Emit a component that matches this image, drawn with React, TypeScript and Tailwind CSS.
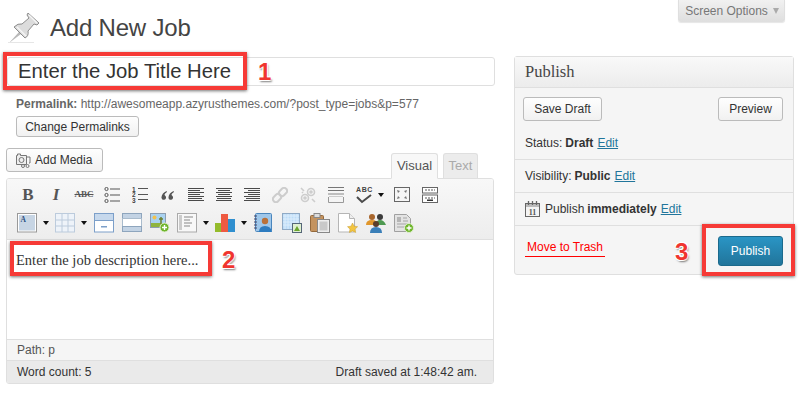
import React from 'react';

const sans = "font-['Liberation_Sans',Arial,sans-serif]";
const serif = "font-['Liberation_Serif',Georgia,serif]";
const calloutBox = 'absolute border-[4px] border-[#f63a36] shadow-[0_1px_3px_rgba(0,0,0,0.55)]';
const calloutNumber =
  "absolute font-['Liberation_Sans',Arial,sans-serif] font-bold text-[24px] leading-none text-[#f0352f] [text-shadow:-1px_-1px_0_#fff,1px_-1px_0_#fff,-1px_1px_0_#fff,1px_1px_0_#ddd,1px_2px_2px_rgba(0,0,0,0.5)]";

const Svg: React.FC<{ children: React.ReactNode; w?: number; h?: number }> = ({ children, w = 20, h = 20 }) => (
  <svg width={w} height={h} viewBox={`0 0 ${w} ${h}`} className="block shrink-0">
    {children}
  </svg>
);

const Lines: React.FC<{ rows: [number, number][] }> = ({ rows }) => (
  <Svg w={16} h={16}>
    {rows.map(([x, w], i) => (
      <rect key={i} x={x} y={1 + i * 2} width={w} height={1} fill="#4a4a4a" />
    ))}
  </Svg>
);

const PinIcon = () => (
  <svg width="32" height="32" viewBox="0 0 32 32" className="block shrink-0">
    <path d="M1 30 L11 19 L13 21 Z" fill="#b9b9b9" />
    <path d="M20 0 L31 10 L29 12 L26 11 L20 18 Q21 23 17 25 L6 14 Q10 10 14 11 L21 5 L19 2 Z" fill="#dcdcdc" stroke="#8d8d8d" strokeWidth="1" />
    <path d="M21 2 L29 10 M9 14 L18 23" stroke="#f6f6f6" strokeWidth="1.4" fill="none" />
    <rect x="0" y="29" width="26" height="1" fill="#e6e6e6" />
  </svg>
);

const MediaIcon = () => (
  <svg width="16" height="16" viewBox="0 0 16 16" className="block shrink-0" fill="none" stroke="#777" strokeWidth="1">
    <path d="M1.5 3.5h1V2h3v1.5h6v9h-10z" fill="#eee" />
    <circle cx="6.5" cy="8" r="2.5" />
    <path d="M12 5h3v6h-1" />
    <circle cx="8" cy="14" r="1.5" />
    <circle cx="12.5" cy="14" r="1.5" />
  </svg>
);

const BulletList = () => (
  <Svg w={16} h={16}>
    {[2, 8, 14].map((y) => (
      <g key={y}>
        <circle cx="2.5" cy={y} r="1.6" fill="none" stroke="#555" />
        <rect x="6" y={y - 0.5} width="10" height="1" fill="#555" />
      </g>
    ))}
  </Svg>
);

const NumberList = () => (
  <Svg w={16} h={17}>
    {[0, 5.5, 11].map((y, i) => (
      <g key={y}>
        <text x="0" y={y + 5.5} fontSize="6.5" fontWeight="bold" fontFamily="Liberation Sans" fill="#444">
          {i + 1}
        </text>
        <rect x="6" y={Math.round(y) + 2} width="10" height="1" fill="#555" />
      </g>
    ))}
  </Svg>
);

const QuoteIcon = () => (
  <Svg w={14} h={14}>
    <path d="M5.5 3 Q1 5 0.5 9 a2.3 2.3 0 1 0 4 -1 Q3.5 7 3.5 6.5 Q4 5 6 4z" fill="#555" />
    <path d="M12.5 3 Q8 5 7.5 9 a2.3 2.3 0 1 0 4 -1 Q10.5 7 10.5 6.5 Q11 5 13 4z" fill="#555" />
  </Svg>
);

const LinkIcon = () => (
  <Svg w={16} h={16}>
    <g fill="none" stroke="#cdcdcd" strokeWidth="2">
      <rect x="8" y="0.5" width="6" height="9" rx="3" transform="rotate(45 11 5)" />
      <rect x="2" y="6.5" width="6" height="9" rx="3" transform="rotate(45 5 11)" />
    </g>
  </Svg>
);

const UnlinkIcon = () => (
  <Svg w={16} h={16}>
    <g fill="none" stroke="#cdcdcd" strokeWidth="1.6">
      <circle cx="11" cy="5" r="3.5" />
      <circle cx="5" cy="11" r="3.5" />
      <circle cx="11" cy="5" r="1" />
      <circle cx="5" cy="11" r="1" />
      <path d="M1 1l3 3M2 6l1-1M12 12l3 3" />
    </g>
  </Svg>
);

const MoreIcon = () => (
  <Svg w={16} h={16}>
    <path d="M0 .5h16M0 3.5h16" stroke="#777" fill="none" />
    <rect x="0" y="6.5" width="16" height="1" fill="#888" />
    <path d="M.5 10v5.5h15V10" stroke="#999" fill="none" />
    <rect x="1" y="9" width="14" height="1" fill="#ccc" />
  </Svg>
);

const SpellIcon = () => (
  <div className="w-[16px] h-[18px] relative">
    <span className={`${sans} absolute left-0 top-[-1px] text-[7px] leading-[9px] font-bold tracking-[0.6px] text-[#444]`}>ABC</span>
    <svg width="16" height="10" viewBox="0 0 16 10" className="absolute left-0 top-[8px]">
      <path d="M1 3l5 5 9-7" fill="none" stroke="#4b4b4b" strokeWidth="2" />
    </svg>
  </div>
);

const FullscreenIcon = () => (
  <Svg w={16} h={16}>
    <rect x=".5" y=".5" width="15" height="14" fill="#f6f6f6" stroke="#666" />
    <path d="M3 3l3 1-2 2zM13 3l-3 1 2 2zM3 12l3-1-2-2zM13 12l-3-1 2-2z" fill="#777" />
  </Svg>
);

const SinkIcon = () => (
  <Svg w={16} h={16}>
    <rect x=".5" y=".5" width="15" height="5.5" fill="#fff" stroke="#666" />
    <rect x=".5" y="8" width="15" height="7.5" fill="#fff" stroke="#666" />
    <path d="M3 3h10" stroke="#555" strokeDasharray="2 1" />
    <path d="M3 11h10" stroke="#555" strokeDasharray="2 1" />
    <rect x="5" y="12.5" width="6" height="1.5" fill="#333" />
  </Svg>
);

const Arrow = () => (
  <span className="ml-[6px] mt-[1px] w-0 h-0 shrink-0 border-x-[3.5px] border-x-transparent border-t-[4px] border-t-[#111]" />
);

const TextColorIcon = () => (
  <Svg>
    <rect x=".5" y=".5" width="19" height="18.5" fill="#fff" stroke="#999" />
    <rect x="2" y="2" width="16" height="15.5" fill="#c7d5e4" />
    <text x="3.5" y="9" fontSize="7.5" fontWeight="bold" fontFamily="Liberation Serif" fill="#2a4f7f">A</text>
  </Svg>
);

const TableIcon = () => (
  <Svg>
    <rect x=".5" y=".5" width="19" height="18.5" fill="#eef3f9" stroke="#bccbdc" />
    <path d="M7 .5v18.5M13 .5v18.5M.5 7h19M.5 13h19" stroke="#bccbdc" fill="none" />
  </Svg>
);

const RowIcon = () => (
  <Svg>
    <rect x=".5" y=".5" width="19" height="18.5" fill="#fff" stroke="#7c9fc9" />
    <rect x="1" y="1" width="18" height="6" fill="#c6d8ec" />
    <rect x="1" y="7" width="18" height="1" fill="#7c9fc9" />
    <rect x="7" y="13" width="6" height="1.5" fill="#7c9fc9" />
  </Svg>
);

const ColsIcon = () => (
  <Svg>
    <rect x=".5" y=".5" width="19" height="5" fill="#c3d3e4" stroke="#8ea5bd" />
    <rect x=".5" y="5.5" width="19" height="8" fill="#fff" stroke="#a9bbcc" />
    <rect x=".5" y="13.5" width="19" height="5" fill="#c3d3e4" stroke="#8ea5bd" />
  </Svg>
);

const PlusBadge = ({ x, y }: { x: number; y: number }) => (
  <g>
    <circle cx={x} cy={y} r="4.5" fill="#6fb52c" stroke="#dfeecf" />
    <path d={`M${x - 2.5} ${y}h5M${x} ${y - 2.5}v5`} stroke="#fff" strokeWidth="1.4" />
  </g>
);

const ImageAddIcon = () => (
  <Svg>
    <rect x=".5" y=".5" width="15" height="14" fill="#a9d2f0" stroke="#8c9db0" />
    <circle cx="4.5" cy="4.5" r="2" fill="#f3c14b" />
    <rect x="1" y="10" width="14" height="4" fill="#8fb43f" />
    <path d="M11 4v7M9 6h4" stroke="#6c7f2e" strokeWidth="1.5" />
    <PlusBadge x={14.5} y={14.5} />
  </Svg>
);

const PageLinesIcon = () => (
  <Svg>
    <rect x=".5" y=".5" width="19" height="18.5" fill="#f8f8f8" stroke="#aaa" />
    <rect x="2" y="2" width="3" height="15" fill="#ccc" />
    <path d="M7 4h9M7 7h6M7 10h8M7 13h6" stroke="#888" fill="none" />
  </Svg>
);

const ChartIcon = () => (
  <Svg>
    <rect x="0" y="10" width="7" height="9" fill="#94bb2b" />
    <rect x="6" y="1" width="7" height="18" fill="#ee5a42" />
    <rect x="13" y="6" width="7" height="13" fill="#2f8fcf" />
  </Svg>
);

const AddressBookIcon = () => (
  <Svg>
    <rect x="1.5" y=".5" width="16" height="18" rx="1" fill="#9fc7ea" stroke="#4a86bd" />
    <path d="M0 3h3M0 6h3M0 9h3M0 12h3M0 15h3" stroke="#446" fill="none" />
    <circle cx="11" cy="8" r="3.2" fill="#b9713a" />
    <path d="M5 19q0-6 6-6t7 6z" fill="#2d7cc0" />
  </Svg>
);

const PatternIcon = () => (
  <Svg>
    <rect x=".5" y=".5" width="17" height="16" fill="#bcdcf8" stroke="#90aac5" />
    <path d="M3 1v15M6 1v15M9 1v15M12 1v15M15 1v15M1 3h16M1 6h16M1 9h16M1 12h16" stroke="#dcedfb" fill="none" />
    <rect x="10.5" y="10.5" width="9" height="9" fill="#dff0d0" stroke="#567" />
    <path d="M12 18l3-5 3 5z" fill="#6aa52f" />
  </Svg>
);

const ClipboardIcon = () => (
  <Svg>
    <rect x=".5" y="2.5" width="13" height="16" rx="1" fill="#c4935f" stroke="#94693c" />
    <rect x="4" y="0.5" width="6" height="4" fill="#ddd" stroke="#888" />
    <rect x="7.5" y="6.5" width="12" height="13" fill="#eee" stroke="#888" />
    <rect x="9.5" y="8.5" width="8" height="9" fill="#c9c9c9" />
  </Svg>
);

const StarPageIcon = () => (
  <Svg>
    <path d="M.5.5h11l5 5v13.5H.5z" fill="#fff" stroke="#b5b5b5" />
    <path d="M11.5.5v5h5" fill="#eee" stroke="#b5b5b5" />
    <path d="M14.5 10l1.6 3.2 3.5.5-2.5 2.4.6 3.4-3.2-1.6-3.1 1.6.6-3.4-2.5-2.4 3.5-.5z" fill="#f3c541" stroke="#c79a2b" strokeWidth=".5" />
  </Svg>
);

const PeopleIcon = () => (
  <Svg>
    <circle cx="6" cy="4" r="3" fill="#a8662d" />
    <path d="M0 12q0-5 6-5t5 5z" fill="#e0962b" />
    <circle cx="14" cy="4" r="3" fill="#3c3c3c" />
    <path d="M10 12q0-5 4-5t6 5z" fill="#4f9a52" />
    <circle cx="10" cy="11" r="3" fill="#5a3d2a" />
    <path d="M4 20q0-6 6-6t6 6z" fill="#3a7fb8" />
  </Svg>
);

const DocAddIcon = () => (
  <Svg>
    <path d="M.5 1.5h12l4 4v13H.5z" fill="#e3e3e3" stroke="#a0a0a0" />
    <rect x="3" y="4" width="4" height="5" fill="#b5b5b5" />
    <path d="M9 5h4M9 8h5M3 11h10M3 14h8" stroke="#a5a5a5" fill="none" />
    <PlusBadge x={15} y={15} />
  </Svg>
);

const CalendarIcon = () => (
  <svg width="15" height="16" viewBox="0 0 15 16" className="block shrink-0">
    <rect x=".5" y="2.5" width="14" height="13" fill="#f4f4f4" stroke="#666" />
    <rect x="1" y="3" width="13" height="3" fill="#bbb" />
    <path d="M3.5 0v4M7.5 0v4M11.5 0v4" stroke="#666" strokeWidth="1.3" />
    <text x="7.5" y="14" textAnchor="middle" fontSize="8" fontWeight="bold" fontFamily="Liberation Serif" fill="#555">11</text>
  </svg>
);

const ToolCell: React.FC<{ children: React.ReactNode }> = ({ children }) => (
  <div className="w-[28px] h-[20px] flex items-center justify-center shrink-0">{children}</div>
);

const WpButton: React.FC<{ label: string; className: string }> = ({ label, className }) => (
  <button className={`${className} flex items-center justify-center rounded-[3px] border border-[#bbb] bg-gradient-to-b from-[#fefefe] to-[#f1f1f1] text-[12px] text-[#333]`}>
    {label}
  </button>
);

const Row: React.FC<{ children: React.ReactNode; className?: string }> = ({ children, className = '' }) => (
  <div className={`px-[10px] flex items-center border-[#dfdfdf] text-[12px] text-[#333] ${className}`}>{children}</div>
);

const EditLink = () => <a className="ml-[4px] text-[#21759b] underline">Edit</a>;

const App: React.FC = () => {
  return (
    <div className={`${sans} relative w-[802px] h-[414px] bg-white overflow-hidden flex items-start text-[#333]`}>
      <div className="ml-[6px] w-[488px] shrink-0">
        <div className="h-[53px] pl-[2px] pt-[13px] flex items-start gap-[10px]">
          <PinIcon />
          <h1 className="text-[24px] leading-[30px] text-[#444] tracking-[-0.2px]">Add New Job</h1>
        </div>
        <div className="ml-[1px] h-[29px] mt-[4px] border border-[#dfdfdf] rounded-[3px] bg-white pl-[10px] flex items-center text-[20.3px] text-[#333] w-[488px]">
          Enter the Job Title Here
        </div>
        <div className="pl-[10px] mt-[11px] text-[12px] leading-[15px] text-[#666]">
          <b>Permalink:</b> http://awesomeapp.azyrusthemes.com/?post_type=jobs&amp;p=577
        </div>
        <WpButton label="Change Permalinks" className="ml-[10px] mt-[4px] w-[123px] h-[21px]" />
        <div className="mt-[11px] h-[31px] flex items-start relative">
          <button className="w-[97px] h-[24px] rounded-[3px] border border-[#bbb] bg-gradient-to-b from-[#fefefe] to-[#f1f1f1] flex items-center gap-[4px] pl-[8px] text-[12px] text-[#333]">
            <MediaIcon />
            Add Media
          </button>
          <div className="ml-auto mr-[16px] mt-[5px] flex gap-[5px] z-10">
            <div className="w-[47px] h-[26px] rounded-t-[3px] border border-[#dfdfdf] border-b-[#f8f8f8] bg-[#f8f8f8] flex items-center justify-center text-[13px] text-[#555]">
              Visual
            </div>
            <div className="w-[35px] h-[25px] rounded-t-[3px] border border-[#dfdfdf] border-b-0 bg-[#ececec] flex items-center justify-center text-[13px] text-[#aaa]">
              Text
            </div>
          </div>
        </div>
        <div className="-mt-[1px] h-[206px] border border-[#dfdfdf] rounded-[3px] flex flex-col overflow-hidden">
          <div className="h-[61px] shrink-0 bg-gradient-to-b from-[#f8f8f8] to-[#ededed] border-b border-[#dfdfdf] pl-[7px] pt-[4px]">
            <div className="h-[21px] mt-[1px] flex items-center">
              <ToolCell><span className={`${serif} text-[17px] font-bold text-[#555]`}>B</span></ToolCell>
              <ToolCell><span className={`${serif} text-[17px] italic font-bold text-[#555]`}>I</span></ToolCell>
              <ToolCell><span className={`${serif} text-[9px] font-bold line-through text-[#555]`}>ABC</span></ToolCell>
              <ToolCell><BulletList /></ToolCell>
              <ToolCell><NumberList /></ToolCell>
              <ToolCell><QuoteIcon /></ToolCell>
              <ToolCell><Lines rows={[[0, 16], [0, 12], [0, 16], [0, 12], [0, 16], [0, 14], [0, 16]]} /></ToolCell>
              <ToolCell><Lines rows={[[0, 16], [2, 12], [0, 16], [2, 12], [0, 16], [1, 14], [0, 16]]} /></ToolCell>
              <ToolCell><Lines rows={[[0, 16], [4, 12], [0, 16], [4, 12], [0, 16], [2, 14], [0, 16]]} /></ToolCell>
              <ToolCell><LinkIcon /></ToolCell>
              <ToolCell><UnlinkIcon /></ToolCell>
              <ToolCell><MoreIcon /></ToolCell>
              <div className="w-[38px] flex items-center pl-[6px] shrink-0"><SpellIcon /><Arrow /></div>
              <ToolCell><FullscreenIcon /></ToolCell>
              <ToolCell><SinkIcon /></ToolCell>
            </div>
            <div className="h-[21px] mt-[7px] pl-[3px] flex items-center">
              <TextColorIcon /><Arrow />
              <div className="ml-[6px] flex items-center"><TableIcon /><Arrow /></div>
              <div className="ml-[7px]"><RowIcon /></div>
              <div className="ml-[8px]"><ColsIcon /></div>
              <div className="ml-[8px]"><ImageAddIcon /></div>
              <div className="ml-[7px] flex items-center"><PageLinesIcon /><Arrow /></div>
              <div className="ml-[6px] flex items-center"><ChartIcon /><Arrow /></div>
              <div className="ml-[7px]"><AddressBookIcon /></div>
              <div className="ml-[8px]"><PatternIcon /></div>
              <div className="ml-[8px]"><ClipboardIcon /></div>
              <div className="ml-[8px]"><StarPageIcon /></div>
              <div className="ml-[8px]"><PeopleIcon /></div>
              <div className="ml-[8px]"><DocAddIcon /></div>
            </div>
          </div>
          <div className={`${serif} flex-1 bg-white pl-[9px] pt-[11px] text-[14.5px] leading-[18px] text-[#333]`}>
            Enter the job description here...
          </div>
          <div className="h-[21px] shrink-0 bg-[#f5f5f5] border-t border-[#dfdfdf] pl-[10px] flex items-center text-[12px] text-[#555]">
            Path: p
          </div>
          <div className="h-[23px] shrink-0 bg-[#eaeaea] border-t border-[#dfdfdf] pl-[10px] pr-[16px] flex items-center justify-between text-[12px] text-[#333]">
            <span>Word count: 5</span>
            <span>Draft saved at 1:48:42 am.</span>
          </div>
        </div>
      </div>

      <div className="ml-[20px] w-[280px] shrink-0 flex flex-col items-end">
        <div className="mr-[9px] w-[107px] h-[22px] pl-[1px] border border-t-0 border-[#dfdfdf] rounded-b-[3px] bg-gradient-to-b from-[#f1f1f1] to-[#dfdfdf] shadow-[0_1px_1px_rgba(0,0,0,0.1)] flex items-center justify-center gap-[5px] text-[12px] text-[#777]">
          Screen Options
          <span className="w-0 h-0 border-x-[3.5px] border-x-transparent border-t-[6px] border-t-[#aaa]" />
        </div>
        <div className="mt-[34px] w-[280px] h-[219px] border border-[#dfdfdf] rounded-[3px] bg-[#f5f5f5] flex flex-col">
          <div className={`${serif} h-[31px] shrink-0 bg-gradient-to-b from-[#f9f9f9] to-[#ececec] border-b border-[#dfdfdf] pl-[10px] flex items-center text-[16.5px] text-[#464646]`}>
            Publish
          </div>
          <div className="pl-[8px] pr-[10px] mt-[9px] flex items-start justify-between">
            <WpButton label="Save Draft" className="w-[79px] h-[24px]" />
            <WpButton label="Preview" className="w-[65px] h-[24px]" />
          </div>
          <Row className="h-[39px] pt-[5px] border-b">
            Status:<b className="ml-[3px]">Draft</b><EditLink />
          </Row>
          <Row className="h-[33px] border-b">
            Visibility:<b className="ml-[3px]">Public</b><EditLink />
          </Row>
          <Row className="h-[33px] border-b">
            <CalendarIcon />
            <span className="ml-[5px]">Publish</span><b className="ml-[3px]">immediately</b><EditLink />
          </Row>
          <div className="flex-1 pl-[10px] pr-[10px] flex items-center justify-between">
            <a className="mt-[-4px] w-[80px] pl-[2px] text-[12px] leading-[15px] pb-[1px] text-[#f00] border-b border-[#f00]">Move to Trash</a>
            <button className="mt-[1px] w-[65px] h-[30px] rounded-[3px] border border-[#1b6a8c] bg-gradient-to-b from-[#2a95c5] to-[#21759b] text-[12px] text-white">
              Publish
            </button>
          </div>
        </div>
      </div>

      <div className={`${calloutBox} left-[3px] top-[52px] w-[244px] h-[38px]`} />
      <span className={`${calloutNumber} left-[258px] top-[60px]`}>1</span>
      <div className={`${calloutBox} left-[10px] top-[241px] w-[202px] h-[35px]`} />
      <span className={`${calloutNumber} left-[222px] top-[248px]`}>2</span>
      <div className={`${calloutBox} left-[702px] top-[224px] w-[93px] h-[52px]`} />
      <span className={`${calloutNumber} left-[675px] top-[240px]`}>3</span>
    </div>
  );
};

export default App;
